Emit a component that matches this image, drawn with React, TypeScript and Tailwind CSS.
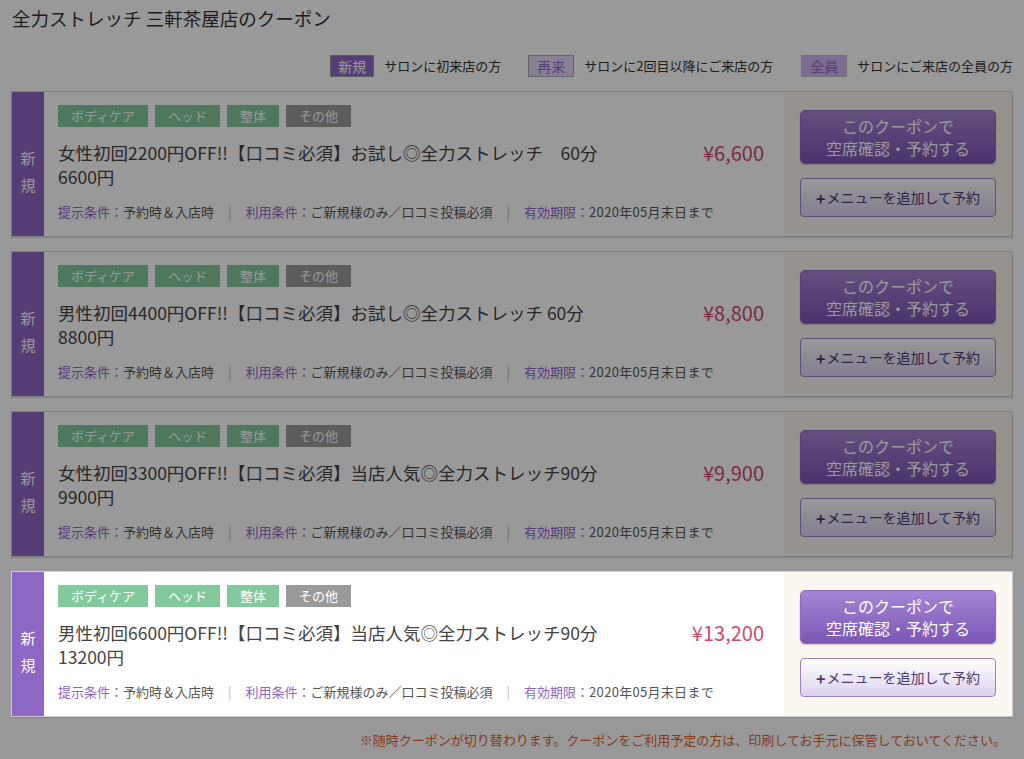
import React from "react";

type Coupon = {
  title: string;
  sub: string;
  price: string;
};

const coupons: Coupon[] = [
  { title: "女性初回2200円OFF!!【口コミ必須】お試し◎全力ストレッチ　60分", sub: "6600円", price: "¥6,600" },
  { title: "男性初回4400円OFF!!【口コミ必須】お試し◎全力ストレッチ 60分", sub: "8800円", price: "¥8,800" },
  { title: "女性初回3300円OFF!!【口コミ必須】当店人気◎全力ストレッチ90分", sub: "9900円", price: "¥9,900" },
  { title: "男性初回6600円OFF!!【口コミ必須】当店人気◎全力ストレッチ90分", sub: "13200円", price: "¥13,200" },
];

const tags = [
  { label: "ボディケア", cls: "w-[90px] bg-[#82c99c]" },
  { label: "ヘッド", cls: "w-[65px] bg-[#82c99c]" },
  { label: "整体", cls: "w-[52px] bg-[#82c99c]" },
  { label: "その他", cls: "w-[65px] bg-[#9a9a9a]" },
];

const CouponCard = ({ c, active }: { c: Coupon; active?: boolean }) => {
  return (
    <div
      className={`flex h-[146px] border border-[#cfcfcf] bg-white shadow-[0_1px_1px_rgba(0,0,0,0.12)] ${active ? "relative z-20" : ""}`}
    >
      <div className="w-[32px] shrink-0 bg-[#8e66c4] flex flex-col items-center justify-center pt-[14px] text-white text-[15px] leading-[27px]">
        <span>新</span>
        <span>規</span>
      </div>
      <div className="flex-1 pl-[14px] pr-[20px] pt-[13px]">
        <div className="flex gap-[7px]">
          {tags.map((t) => (
            <span
              key={t.label}
              className={`${t.cls} h-[22px] flex items-center justify-center text-white text-[13px]`}
            >
              {t.label}
            </span>
          ))}
        </div>
        <div className="flex mt-[14px]">
          <p className="flex-1 text-[17.5px] leading-[24px] text-[#444]">
            {c.title}
            <br />
            {c.sub}
          </p>
          <span className="text-[20px] leading-[24px] text-[#cf4a6e] whitespace-nowrap">{c.price}</span>
        </div>
        <div className="mt-[14px] flex items-center text-[13px] leading-[18px] text-[#555] whitespace-nowrap">
          <span className="text-[#8e66c4]">提示条件：</span>
          <span>予約時＆入店時</span>
          <span className="mx-[14px] text-[#bbb]">|</span>
          <span className="text-[#8e66c4]">利用条件：</span>
          <span>ご新規様のみ／口コミ投稿必須</span>
          <span className="mx-[14px] text-[#bbb]">|</span>
          <span className="text-[#8e66c4]">有効期限：</span>
          <span className="tracking-[0.3px]">2020年05月末日まで</span>
        </div>
      </div>
      <div className="w-[228px] shrink-0 bg-[#fbf6ef] px-[16px] pt-[18px] flex flex-col gap-[14px]">
        <button className="h-[54px] w-full rounded-[5px] border border-[#8a6bc0] bg-gradient-to-b from-[#a586d6] to-[#7c56b5] text-white text-[16px] leading-[22px] shadow-[0_1px_2px_rgba(0,0,0,0.2)]">
          このクーポンで
          <br />
          空席確認・予約する
        </button>
        <button className="h-[39px] w-full rounded-[4px] border border-[#9a82c8] bg-gradient-to-b from-white to-[#ddd1ef] text-[#4b3b6e] text-[14px] flex items-center justify-center">
          <span className="font-bold text-[16px] mr-[1px]">+</span>メニューを追加して予約
        </button>
      </div>
    </div>
  );
};

export default function App() {
  return (
    <div
      className="relative min-h-screen bg-white px-[11px] pt-[6px] text-[#333]"
      style={{ fontFamily: '"Noto Sans CJK JP", "Noto Sans", sans-serif' }}
    >
      <h1 className="text-[18.5px] leading-[24px] pl-[1px]">全力ストレッチ 三軒茶屋店のクーポン</h1>
      <div className="mt-[25px] flex justify-end items-center text-[13px] h-[22px]">
        <span className="w-[44px] h-[22px] flex items-center justify-center bg-[#8e66c4] text-white text-[14px] border border-[#999]">新規</span>
        <span className="ml-[10px]">サロンに初来店の方</span>
        <span className="ml-[27px] w-[46px] h-[22px] flex items-center justify-center bg-[#e4d8f6] text-[#8e66c4] text-[14px] border border-[#aaa]">再来</span>
        <span className="ml-[10px]">サロンに2回目以降にご来店の方</span>
        <span className="ml-[28px] w-[46px] h-[22px] flex items-center justify-center bg-[#ccb6ee] text-[#8e66c4] text-[14px] border border-[#bbb]">全員</span>
        <span className="ml-[10px]">サロンにご来店の全員の方</span>
      </div>
      <div className="mt-[14px] flex flex-col gap-[14px]">
        {coupons.map((c, i) => (
          <CouponCard key={i} c={c} active={i === coupons.length - 1} />
        ))}
      </div>
      <p className="mt-[14px] pr-[7px] text-right text-[13px] leading-[18px] text-[#d8672e]">
        ※随時クーポンが切り替わります。クーポンをご利用予定の方は、印刷してお手元に保管しておいてください。
      </p>
      <div className="absolute inset-0 z-10 bg-black/40" />
    </div>
  );
}
